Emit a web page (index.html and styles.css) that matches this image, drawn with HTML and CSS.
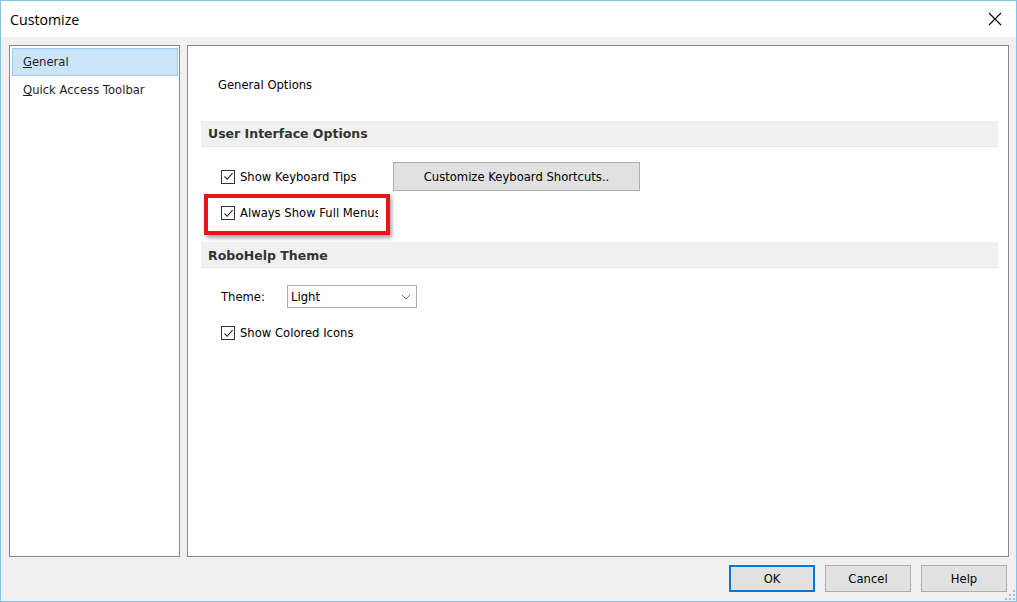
FILE: index.html
```html
<!DOCTYPE html>
<html>
<head>
<meta charset="utf-8">
<link rel="stylesheet" href="styles.css">
</head>
<body>
<div class="window">
  <div class="titlebar">
    <span class="title">Customize</span>
    <svg class="close" width="14" height="14" viewBox="0 0 14 14"><path d="M1 1L13 13M13 1L1 13" stroke="#000" stroke-width="1.1" fill="none"/></svg>
  </div>
  <div class="main">
    <div class="panels">
      <div class="list">
        <div class="item selected"><u>G</u>eneral</div>
        <div class="item"><u>Q</u>uick Access Toolbar</div>
      </div>
      <div class="page">
        <div class="page-title">General Options</div>
        <div class="band">User Interface Options</div>
        <div class="row row-first">
          <label class="check kb"><span class="box"><svg width="11" height="11" viewBox="0 0 11 11"><path d="M1.5 5.5L4.2 8.3L9.6 2.2" stroke="#222" stroke-width="1.1" fill="none"/></svg></span>Show Keyboard Tips</label>
          <button class="btn wide">Customize Keyboard Shortcuts..</button>
        </div>
        <div class="highlight">
          <label class="check"><span class="box"><svg width="11" height="11" viewBox="0 0 11 11"><path d="M1.5 5.5L4.2 8.3L9.6 2.2" stroke="#222" stroke-width="1.1" fill="none"/></svg></span>Always Show Full Menus</label>
        </div>
        <div class="band band2">RoboHelp Theme</div>
        <div class="row theme-row">
          <span class="theme-label">Theme:</span>
          <div class="select"><span>Light</span><svg width="10" height="6" viewBox="0 0 10 6"><path d="M1 1L5 5L9 1" stroke="#777" stroke-width="1" fill="none"/></svg></div>
        </div>
        <div class="row icons-row">
          <label class="check"><span class="box"><svg width="11" height="11" viewBox="0 0 11 11"><path d="M1.5 5.5L4.2 8.3L9.6 2.2" stroke="#222" stroke-width="1.1" fill="none"/></svg></span>Show Colored Icons</label>
        </div>
      </div>
    </div>
    <div class="footer">
      <button class="btn foot default">OK</button>
      <button class="btn foot">Cancel</button>
      <button class="btn foot">Help</button>
    </div>
    <div class="grip">
      <i class="d1"></i><i class="d2"></i><i class="d3"></i><i class="d4"></i><i class="d5"></i><i class="d6"></i>
    </div>
  </div>
</div>
</body>
</html>
```
FILE: styles.css
```css
* { box-sizing: border-box; }
html, body { margin: 0; padding: 0; }
body {
  width: 1017px;
  height: 602px;
  font-family: "DejaVu Sans", sans-serif;
  font-size: 11.6px;
  color: #000;
  overflow: hidden;
}
.window {
  width: 1017px;
  height: 602px;
  border: 1px solid #7fc4eb;
  display: flex;
  flex-direction: column;
  background: #f0f0f0;
  position: relative;
}
.titlebar {
  height: 36px;
  background: #fff;
  display: flex;
  align-items: center;
  justify-content: space-between;
  padding: 0 14px 0 9px;
}
.title {
  font-family: "Open Sans", "Noto Sans", sans-serif;
  font-size: 14.2px;
  color: #000;
  margin-top: 1px;
}
.close { margin-top: 0; }
.main {
  flex: 1;
  display: flex;
  flex-direction: column;
  padding: 8px 7px 0 8px;
  position: relative;
}
.panels {
  display: flex;
  gap: 7px;
  height: 512px;
}
.list {
  width: 171px;
  background: #fff;
  border: 1px solid #828790;
  padding: 2px 1px 0 2px;
}
.item {
  height: 28px;
  line-height: 27px;
  padding-left: 10px;
  border: 1px solid transparent;
  color: #1e1e1e;
}
.item.selected {
  background: #cce4f7;
  border-color: #99c9ef;
}
.page {
  flex: 1;
  background: #fff;
  border: 1px solid #828790;
  padding: 0 10px 0 13px;
}
.page-title {
  margin-top: 31px;
  padding-left: 17px;
  line-height: 16px;
  height: 16px;
}
.band {
  margin-top: 28px;
  height: 26px;
  line-height: 25px;
  background: #f0f0f0;
  border-bottom: 1px solid #e6e6e6;
  font-family: "DejaVu Sans", sans-serif;
  font-weight: bold;
  font-size: 12.5px;
  color: #333;
  padding-left: 7px;
}
.band2 { margin-top: 7px; line-height: 27px; }
.row {
  display: flex;
  align-items: center;
  padding-left: 20px;
}
.row-first {
  margin-top: 15px;
  height: 29px;
}
.check {
  display: flex;
  align-items: center;
  white-space: nowrap;
  line-height: 16px;
}
.kb { width: 172px; }
.box {
  width: 14px;
  height: 14px;
  border: 1px solid #333;
  background: #fff;
  display: flex;
  align-items: center;
  justify-content: center;
  margin-right: 5px;
  flex: none;
}
.btn {
  font-family: "DejaVu Sans", sans-serif;
  font-size: 11.6px;
  color: #000;
  background: #e1e1e1;
  border: 1px solid #adadad;
  padding: 0;
  margin: 0;
}
.wide {
  width: 247px;
  height: 29px;
}
.highlight {
  margin-top: 3px;
  margin-left: 3px;
  width: 186px;
  height: 41px;
  border: 4px solid #e8141c;
  box-shadow: 2px 3px 4px rgba(0, 0, 0, 0.35);
  padding-left: 13px;
  padding-bottom: 3px;
  display: flex;
  align-items: center;
  overflow: hidden;
}
.highlight .check {
  width: 157px;
  overflow: hidden;
}
.theme-row {
  margin-top: 17px;
  height: 23px;
}
.theme-label {
  width: 66px;
}
.select {
  width: 130px;
  height: 23px;
  border: 1px solid #acacac;
  background: #fff;
  display: flex;
  align-items: center;
  justify-content: space-between;
  padding: 0 5px 0 3px;
}
.icons-row {
  margin-top: 17px;
  height: 16px;
}
.footer {
  display: flex;
  justify-content: flex-end;
  gap: 10px;
  margin-top: 8px;
  padding-right: 2px;
}
.foot {
  width: 86px;
  height: 27px;
}
.foot.default {
  border: 2px solid #0078d7;
}
.grip {
  position: absolute;
  right: 0;
  bottom: 0;
  width: 12px;
  height: 12px;
}
.grip i {
  position: absolute;
  width: 2px;
  height: 2px;
  background: #b8b8b8;
}
.grip .d1 { right: 1px; bottom: 1px; }
.grip .d2 { right: 5px; bottom: 1px; }
.grip .d3 { right: 9px; bottom: 1px; }
.grip .d4 { right: 1px; bottom: 5px; }
.grip .d5 { right: 5px; bottom: 5px; }
.grip .d6 { right: 1px; bottom: 9px; }
```
